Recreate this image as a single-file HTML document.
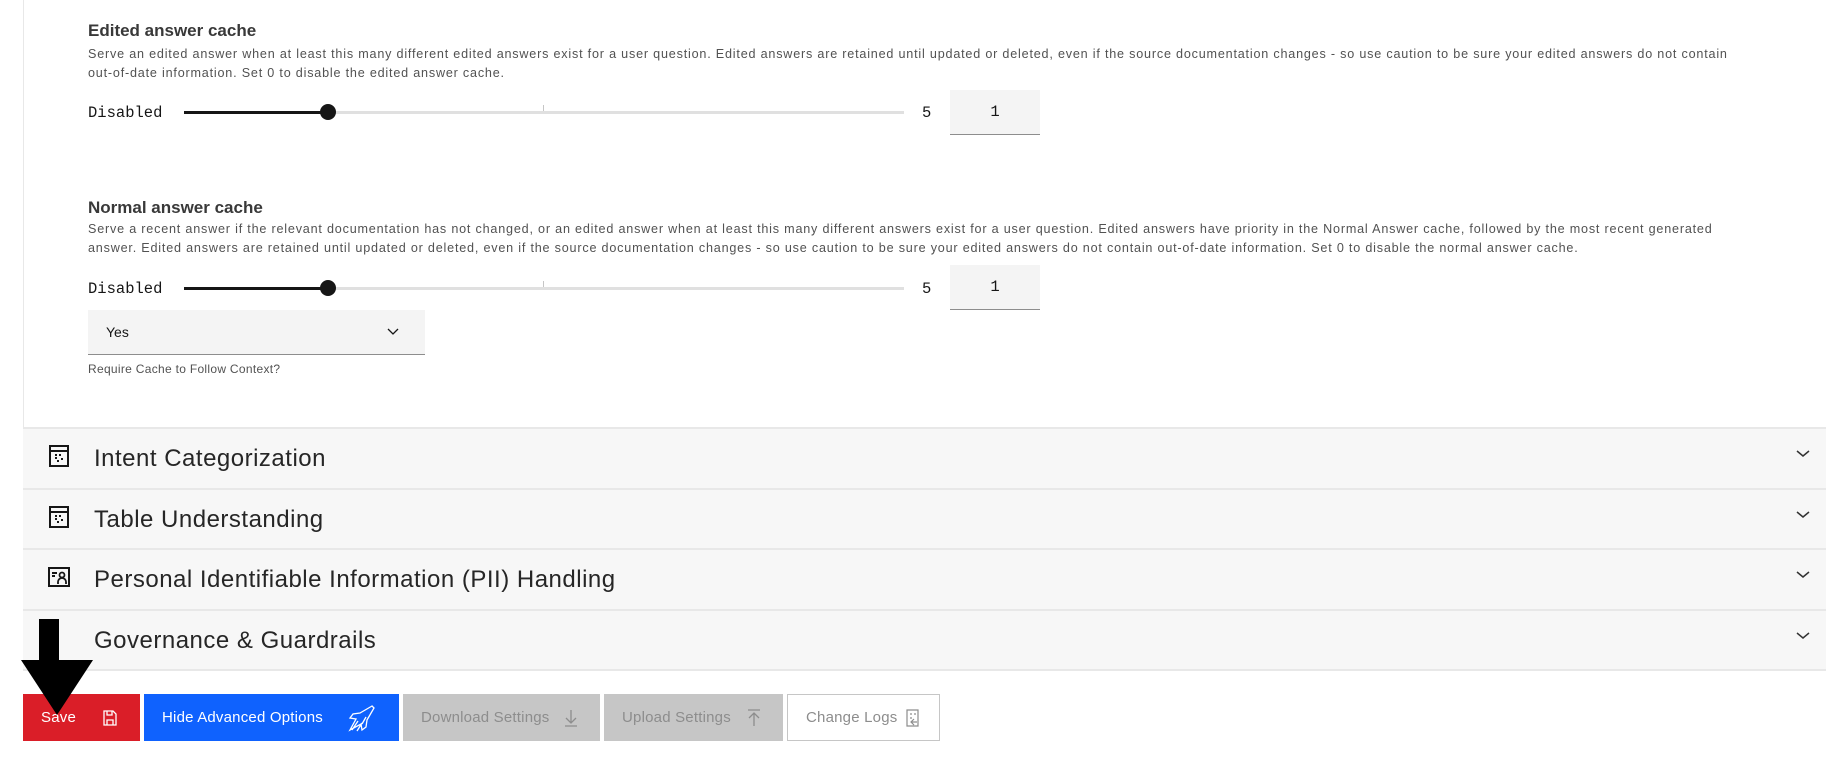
<!DOCTYPE html>
<html><head><meta charset="utf-8"><style>
*{box-sizing:border-box;margin:0;padding:0}
body{width:1826px;height:771px;overflow:hidden;background:#fff;font-family:"Liberation Sans",sans-serif;color:#161616;position:relative}
.abs{position:absolute}
.vline{left:23px;top:0;width:1px;height:427px;background:#e8e8e8}
.h{font-weight:bold;font-size:17px;color:#393939;left:88px}
.d{font-size:12.6px;letter-spacing:0.8px;color:#525252;left:88px;line-height:18.5px;white-space:nowrap}
.mono{font-family:"Liberation Mono",monospace;font-size:15.5px}
.track{height:3px;background:#e0e0e0;left:184px;width:720px}
.fill{height:3px;background:#161616;left:184px;width:143px}
.thumb{width:16px;height:16px;border-radius:50%;background:#161616}
.inp{background:#f4f4f4;border-bottom:1px solid #8d8d8d;width:90px;height:45px;text-align:center;line-height:45px}
.acc{left:23px;width:1803px;height:61px;background:#f7f7f7;border-top:2px solid #e8e8e8}
.acc span{position:absolute;left:71px;top:16px;font-size:24px;letter-spacing:0.5px;color:#262626;font-weight:300}
.acc svg.ic{position:absolute;left:24px;top:15px}
.acc svg.ch{position:absolute;left:1772px;top:20px}
.btn{top:694px;height:47px;font-size:15px;line-height:47px;padding-left:18px;letter-spacing:0.2px}
</style></head><body>
<div class="abs vline"></div>
<div class="abs h" style="top:21px">Edited answer cache</div>
<div class="abs d" style="top:45px">Serve an edited answer when at least this many different edited answers exist for a user question. Edited answers are retained until updated or deleted, even if the source documentation changes - so use caution to be sure your edited answers do not contain<br>out-of-date information. Set 0 to disable the edited answer cache.</div>
<div class="abs mono" style="left:88px;top:104px">Disabled</div>
<div class="abs track" style="top:111px"></div>
<div class="abs fill" style="top:111px"></div>
<div class="abs" style="left:543px;top:105px;width:1px;height:6px;background:#c6c6c6"></div>
<div class="abs thumb" style="left:320px;top:104px"></div>
<div class="abs mono" style="left:922px;top:104px">5</div>
<div class="abs inp mono" style="left:950px;top:90px">1</div>

<div class="abs h" style="top:198px">Normal answer cache</div>
<div class="abs d" style="top:220px">Serve a recent answer if the relevant documentation has not changed, or an edited answer when at least this many different answers exist for a user question. Edited answers have priority in the Normal Answer cache, followed by the most recent generated<br>answer. Edited answers are retained until updated or deleted, even if the source documentation changes - so use caution to be sure your edited answers do not contain out-of-date information. Set 0 to disable the normal answer cache.</div>
<div class="abs mono" style="left:88px;top:280px">Disabled</div>
<div class="abs track" style="top:287px"></div>
<div class="abs fill" style="top:287px"></div>
<div class="abs" style="left:543px;top:281px;width:1px;height:6px;background:#c6c6c6"></div>
<div class="abs thumb" style="left:320px;top:280px"></div>
<div class="abs mono" style="left:922px;top:280px">5</div>
<div class="abs inp mono" style="left:950px;top:265px">1</div>
<div class="abs" style="left:88px;top:310px;width:337px;height:45px;background:#f4f4f4;border-bottom:1px solid #8d8d8d"><span class="abs" style="left:18px;top:14px;font-size:14px">Yes</span>
<svg class="abs" style="left:298px;top:17px" width="14" height="10" viewBox="0 0 14 10"><path d="M2 2l5 5 5-5" fill="none" stroke="#161616" stroke-width="1.3"/></svg></div>
<div class="abs" style="left:88px;top:362px;font-size:12px;letter-spacing:0.3px;color:#525252">Require Cache to Follow Context?</div>

<div class="abs acc" style="top:427px"><svg class="ic" width="24" height="24" viewBox="0 0 24 24"><rect x="3" y="2" width="18" height="20" fill="none" stroke="#161616" stroke-width="2"/><path d="M3 7h18" stroke="#161616" stroke-width="2"/><path d="M8 11h2M12 11h2M8 14h2M10 17h2M14 15h2" stroke="#161616" stroke-width="2"/></svg><span>Intent Categorization</span><svg class="ch" width="16" height="10"><path d="M2 2l6 5 6-5" fill="none" stroke="#333" stroke-width="1.5"/></svg></div>
<div class="abs acc" style="top:488px"><svg class="ic" width="24" height="24" viewBox="0 0 24 24"><rect x="3" y="2" width="18" height="20" fill="none" stroke="#161616" stroke-width="2"/><path d="M3 7h18" stroke="#161616" stroke-width="2"/><path d="M8 11h2M12 11h2M8 14h2M10 17h2M14 15h2" stroke="#161616" stroke-width="2"/></svg><span>Table Understanding</span><svg class="ch" width="16" height="10"><path d="M2 2l6 5 6-5" fill="none" stroke="#333" stroke-width="1.5"/></svg></div>
<div class="abs acc" style="top:548px"><svg class="ic" width="24" height="24" viewBox="0 0 24 24"><rect x="2" y="3" width="20" height="18" fill="none" stroke="#161616" stroke-width="2"/><path d="M5 8h5M5 11h3" stroke="#161616" stroke-width="2"/><circle cx="15" cy="10" r="2.5" fill="none" stroke="#161616" stroke-width="1.8"/><path d="M11 19v-2a4 4 0 0 1 8 0v2" fill="none" stroke="#161616" stroke-width="1.8"/></svg><span>Personal Identifiable Information (PII) Handling</span><svg class="ch" width="16" height="10"><path d="M2 2l6 5 6-5" fill="none" stroke="#333" stroke-width="1.5"/></svg></div>
<div class="abs acc" style="top:609px;height:62px;border-bottom:2px solid #e8e8e8"><span>Governance &amp; Guardrails</span><svg class="ch" width="16" height="10"><path d="M2 2l6 5 6-5" fill="none" stroke="#333" stroke-width="1.5"/></svg></div>

<div class="abs btn" style="left:23px;width:117px;background:#da1e28;color:#fff">Save<svg class="abs" style="left:80px;top:16px" width="14" height="16" viewBox="0 0 14 16"><path d="M1 1h9l3 3v11H1z M4 1v4h5V1 M4 15v-5h6v5" fill="none" stroke="#fff" stroke-width="1.3"/></svg></div>
<div class="abs btn" style="left:144px;width:255px;background:#0f62fe;color:#fff">Hide Advanced Options<svg class="abs" style="left:200px;top:9px" width="32" height="32" viewBox="0 0 32 32"><path d="M28 3L16 10 9 11 6 15l6 1-6 11 11-6 1 6 4-3 1-7 7-12zM14 18l-6 9M18 20l-5 8M22 14l-4 7" fill="none" stroke="#fff" stroke-width="1.3"/></svg></div>
<div class="abs btn" style="left:403px;width:197px;background:#c6c6c6;color:#8d8d8d">Download Settings<svg class="abs" style="left:160px;top:15px" width="16" height="18"><path d="M8 1v13M3 9l5 5 5-5M2 17h12" fill="none" stroke="#8d8d8d" stroke-width="1.3"/></svg></div>
<div class="abs btn" style="left:604px;width:179px;background:#c6c6c6;color:#8d8d8d">Upload Settings<svg class="abs" style="left:142px;top:15px" width="16" height="18"><path d="M8 17V4M3 9l5-5 5 5M2 1h12" fill="none" stroke="#8d8d8d" stroke-width="1.3"/></svg></div>
<div class="abs btn" style="left:787px;width:153px;background:#fff;border:1px solid #c6c6c6;color:#8d8d8d;line-height:45px">Change Logs<svg class="abs" style="left:118px;top:14px" width="14" height="18"><path d="M1 1h11v16H1zM4 5h2M8 5h2M4 9h2M8 10l-3 3 3 3M5 13h6" fill="none" stroke="#8d8d8d" stroke-width="1.2"/></svg></div>

<svg class="abs" style="left:20px;top:619px" width="74" height="98" viewBox="0 0 74 98"><path d="M19 0h20v41h34L37 96 1 41h18z" fill="#000"/></svg>
</body></html>
